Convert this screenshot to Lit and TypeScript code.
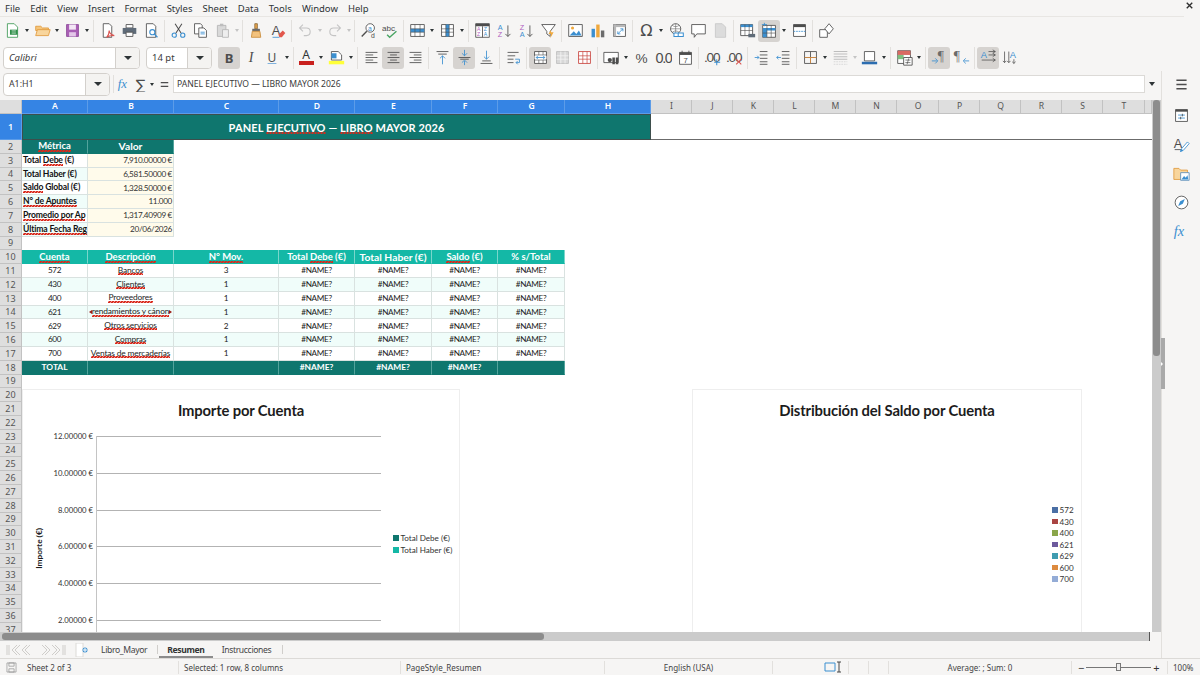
import { LitElement, html, css, svg } from 'lit';
import { customElement } from 'lit/decorators.js';

const BLUE = '#3b8fd0';
const LINE = '#4d4d4d';

// toolbar glyphs, drawn on a 20x20 box
const ICONS: Record<string, unknown> = {
  newdoc: svg`<path d="M4 2h8l4 4v12H4z" fill="#fff" stroke="#3f9a55"/><path d="M7 9h9v6H7z" fill="#2f8f4a"/><path d="M9 10.500h5M9 13h5" stroke="#cfe9d4"/>`,
  open: svg`<path d="M2 5h6l2 2h7v3H2z" fill="#f5c57a" stroke="#e09a3c"/><path d="M2 16l2-7h15l-2 7z" fill="#f8d59c" stroke="#e09a3c"/>`,
  save: svg`<path d="M3 3h14v14H3z" fill="#a95fb5" stroke="#8d4a9a"/><path d="M6 3h8v6H6z" fill="#f3e6f5"/><path d="M6 12h8v5H6z" fill="#e4c7e9"/>`,
  pdf: svg`<path d="M5 2h7l3 3v13H5z" fill="#fff" stroke="${LINE}"/><path d="M9 18c2-2 3-6 3-8 0 3 2 5 6 6-3-.5-6 0-9 2z" fill="none" stroke="#d9534f" stroke-width="1.300"/>`,
  print: svg`<path d="M6 3h8v4H6z" fill="#fff" stroke="${LINE}"/><path d="M2 7h16v7H2z" fill="#5f6b78"/><path d="M6 12h8v5H6z" fill="#fff" stroke="${LINE}"/>`,
  preview: svg`<path d="M4 2h8l3 3v13H4z" fill="#fff" stroke="${LINE}"/><circle cx="11" cy="12" r="3" fill="none" stroke="${BLUE}" stroke-width="1.300"/><path d="M13 14l4 4" stroke="${BLUE}" stroke-width="1.500"/>`,
  cut: svg`<path d="M6 2l7 11M14 2L7 13" stroke="${LINE}" stroke-width="1.200"/><circle cx="5" cy="15.500" r="2.500" fill="none" stroke="${BLUE}" stroke-width="1.300"/><circle cx="15" cy="15.500" r="2.500" fill="none" stroke="${BLUE}" stroke-width="1.300"/>`,
  copy: svg`<path d="M3 2h7l2 2v10H3z" fill="#fff" stroke="${LINE}"/><path d="M8 7h6l3 3v8H8z" fill="#fff" stroke="${LINE}"/><path d="M10 12h5M10 14h5" stroke="${BLUE}"/>`,
  paste: svg`<path d="M4 4h10v13H4z" fill="#d9d9d9" stroke="#b5b5b5"/><path d="M7 2h4v3H7z" fill="#bdbdbd"/><path d="M10 9h7v9h-7z" fill="#eee" stroke="#b5b5b5"/>`,
  clone: svg`<path d="M8 2h3v6H8z" fill="#e8a44c" stroke="#8a6a3a"/><path d="M5 8h9v3H5z" fill="#6b6b6b"/><path d="M5 11h9l1 7H4z" fill="#f3c27d" stroke="#c98b3a"/>`,
  clear: svg`<text x="2" y="15" font-family="Liberation Sans" font-size="15" fill="${LINE}">A</text><path d="M10 15l5-5 3 3-4 5h-3z" fill="#e2574c"/><path d="M3 18h8" stroke="${BLUE}"/>`,
  undo: svg`<path d="M7 3L3 7l4 4M3 7h8c6 0 6 9 0 9H8" fill="none" stroke="#c4c4c4" stroke-width="1.300"/>`,
  redo: svg`<path d="M13 3l4 4-4 4M17 7H9c-6 0-6 9 0 9h3" fill="none" stroke="#c4c4c4" stroke-width="1.300"/>`,
  find: svg`<circle cx="12" cy="7" r="5" fill="#fff" stroke="${LINE}"/><text x="9.500" y="10" font-family="Liberation Sans" font-size="8" fill="${BLUE}">a</text><path d="M8 11l-6 6" stroke="${LINE}" stroke-width="1.600"/><text x="13" y="19" font-family="Liberation Sans" font-size="8" fill="${LINE}">d</text>`,
  spell: svg`<text x="0" y="10" font-family="Liberation Sans" font-size="9.500" fill="${LINE}">abc</text><path d="M6 15l3 3 8-7" fill="none" stroke="#4aa564" stroke-width="1.600"/>`,
  rows: svg`<path d="M2 3h16v14H2z" fill="#fff" stroke="${LINE}"/><path d="M2 8h16v4H2z" fill="${BLUE}"/><path d="M2 8h16M2 12h16M7 3v14M13 3v14" stroke="${LINE}" stroke-width=".700"/>`,
  cols: svg`<path d="M3 3h14v14H3z" fill="#fff" stroke="${LINE}"/><path d="M8 3h4v14H8z" fill="${BLUE}"/><path d="M8 3v14M12 3v14M3 8h14M3 12h14" stroke="${LINE}" stroke-width=".700"/>`,
  sort: svg`<path d="M2 2h16v16H2z" fill="#fff" stroke="${LINE}"/><path d="M2 2h16v3H2z" fill="${LINE}"/><path d="M10 5v13" stroke="${LINE}"/><text x="3.500" y="11" font-family="Liberation Sans" font-size="6" fill="#b05fc0">A</text><text x="3.500" y="17" font-family="Liberation Sans" font-size="6" fill="#b05fc0">Z</text><text x="11.500" y="11" font-family="Liberation Sans" font-size="6" fill="${BLUE}">Z</text><text x="11.500" y="17" font-family="Liberation Sans" font-size="6" fill="${BLUE}">A</text>`,
  asc: svg`<text x="2" y="9" font-family="Liberation Sans" font-size="8.500" fill="${BLUE}">A</text><text x="2" y="18" font-family="Liberation Sans" font-size="8.500" fill="#b05fc0">Z</text><path d="M14 4v13M11 14l3 3 3-3" fill="none" stroke="${LINE}"/>`,
  desc: svg`<text x="2" y="9" font-family="Liberation Sans" font-size="8.500" fill="#b05fc0">Z</text><text x="2" y="18" font-family="Liberation Sans" font-size="8.500" fill="${BLUE}">A</text><path d="M14 4v13M11 14l3 3 3-3" fill="none" stroke="${LINE}"/>`,
  filter: svg`<path d="M2 3h16l-6 8v6l-4-3v-3z" fill="#fff" stroke="${LINE}"/><path d="M13 9l-3 5h3l-1 5 4-7h-3z" fill="#efa83c"/>`,
  image: svg`<path d="M2 3h16v14H2z" fill="#fff" stroke="${LINE}"/><circle cx="6.500" cy="7" r="1.800" fill="#efa83c"/><path d="M3 16l5-5 3 3 3-4 3 6z" fill="${BLUE}"/>`,
  chart: svg`<path d="M3 8h4v10H3z" fill="${BLUE}"/><path d="M8.500 3h4v15h-4z" fill="#efa83c"/><path d="M14 10h4v8h-4z" fill="#6b6b6b"/>`,
  pivot: svg`<path d="M3 3h14v14H3z" fill="#fff" stroke="${LINE}"/><path d="M3 3h14v3H3z" fill="#b8b8b8"/><path d="M3 3h3v14H3z" fill="#b8b8b8"/><path d="M8 14l6-6M11 8h3v3M8 11v3h3" fill="none" stroke="${BLUE}"/>`,
  omega: svg`<text x="10" y="17" text-anchor="middle" font-family="DejaVu Sans" font-size="19" fill="${LINE}">Ω</text>`,
  link: svg`<circle cx="9" cy="8" r="6" fill="#fff" stroke="${LINE}"/><path d="M3 8h12M9 2v12M5 4c3 2 5 2 8 0M5 12c3-2 5-2 8 0" stroke="${LINE}" stroke-width=".600" fill="none"/><path d="M7 13h5v4H7zM12 13h6v4h-6z" fill="#fff" stroke="${BLUE}" stroke-width="1.200"/>`,
  comment: svg`<path d="M2 3h16v11H8l-3 4v-4H2z" fill="#fff" stroke="${LINE}"/>`,
  headerdoc: svg`<path d="M4 2h8l4 4v12H4z" fill="#dcdcdc" stroke="#c8c8c8"/>`,
  printarea: svg`<path d="M2 3h14v13H2z" fill="#fff" stroke="${LINE}"/><path d="M2 3h14v3H2z" fill="${BLUE}"/><path d="M2 10h14M7 3v13M12 3v13" stroke="${LINE}" stroke-width=".700"/><path d="M11 14h8v4h-8z" fill="#5f6b78"/>`,
  freeze: svg`<path d="M2 4h15v14H2z" fill="#fff" stroke="${LINE}"/><path d="M2 7h15v3H2zM2 10h5v8H2z" fill="${BLUE}"/><path d="M2 13h15M7 4v14M12 4v14" stroke="${LINE}" stroke-width=".700"/><path d="M4 1v4M1 3h6" stroke="${BLUE}"/>`,
  split: svg`<path d="M3 3h14v14H3z" fill="#fff" stroke="${LINE}"/><path d="M3 3h14v3H3z" fill="${LINE}"/><path d="M3 11h14" stroke="${BLUE}" stroke-dasharray="2 1"/>`,
  shapes: svg`<path d="M2 9h9v9H2z" fill="#fff" stroke="${LINE}"/><path d="M13 2l5 6-5 6-5-6z" fill="#fff" stroke="${LINE}"/>`,
  left: svg`<path d="M3 4h14M3 7h9M3 10h14M3 13h9M3 16h14" stroke="${LINE}"/>`,
  center: svg`<path d="M3 4h14M6 7h8M3 10h14M6 13h8M3 16h14" stroke="${LINE}"/>`,
  right: svg`<path d="M3 4h14M8 7h9M3 10h14M8 13h9M3 16h14" stroke="${LINE}"/>`,
  vtop: svg`<path d="M3 3h14M5 6h10" stroke="${LINE}"/><path d="M10 18V8M7 11l3-3 3 3" fill="none" stroke="${BLUE}"/>`,
  vmid: svg`<path d="M3 10h14M5 12h10" stroke="${LINE}"/><path d="M10 1v7M7 5l3 3 3-3M10 19v-5M7 16l3-3 3 3" fill="none" stroke="${BLUE}"/>`,
  vbot: svg`<path d="M3 17h14M5 14h10" stroke="${LINE}"/><path d="M10 2v10M7 9l3 3 3-3" fill="none" stroke="${BLUE}"/>`,
  wrap: svg`<path d="M3 4h13M3 8h9M3 12h7M3 16h7" stroke="${LINE}"/><path d="M12 12h5v4h-4M15 14l-2 2 2 2" fill="none" stroke="${BLUE}"/>`,
  merge: svg`<path d="M3 3h14v14H3z" fill="#fff" stroke="${LINE}"/><path d="M3 8h14v4H3z" fill="#fff"/><path d="M3 7h14M3 13h14M8 3v4M13 3v4M8 13v4M13 13v4" stroke="${LINE}" stroke-width=".700"/><path d="M5 10h10M5 10l2-2M5 10l2 2M15 10l-2-2M15 10l-2 2" stroke="${BLUE}" fill="none"/>`,
  mergeoff: svg`<path d="M3 3h14v14H3z" fill="#d8d8d8" stroke="#bdbdbd"/><path d="M3 8h14M3 12h14M8 3v14M13 3v14" stroke="#f2f2f2"/>`,
  unmerge: svg`<path d="M3 3h14v14H3z" fill="#fff" stroke="#c9453f"/><path d="M3 8h14M3 12h14M8 3v14M13 3v14" stroke="#c9453f" stroke-width=".800"/>`,
  currency: svg`<path d="M1 4h17v12H1z" fill="#fff" stroke="${LINE}"/><circle cx="8" cy="13" r="2.500" fill="${LINE}"/><path d="M11 10h3v8h-3zM15 10h3v8h-3z" fill="${LINE}"/>`,
  percent: svg`<text x="10" y="16" text-anchor="middle" font-family="Liberation Sans" font-size="16" fill="${LINE}">%</text>`,
  number: svg`<text x="10" y="16" text-anchor="middle" font-family="Liberation Sans" font-size="17" letter-spacing="-1.500" fill="${LINE}">0.0</text>`,
  date: svg`<path d="M3 4h14v14H3z" fill="#fff" stroke="${LINE}"/><path d="M3 4h14v3H3z" fill="${LINE}"/><path d="M6 2v3M14 2v3" stroke="${LINE}"/><text x="10" y="16" text-anchor="middle" font-family="Liberation Sans" font-size="9" fill="${LINE}">7</text>`,
  addDec: svg`<text x="9" y="15" text-anchor="middle" font-family="Liberation Sans" font-size="16" letter-spacing="-1.500" fill="${LINE}">.00</text><path d="M15 12v7M12 15.500h7" stroke="${BLUE}" stroke-width="1.200"/>`,
  delDec: svg`<text x="9" y="15" text-anchor="middle" font-family="Liberation Sans" font-size="16" letter-spacing="-1.500" fill="${LINE}">.00</text><path d="M12 12l6 6M18 12l-6 6" stroke="#d9534f" stroke-width="1.200"/>`,
  indent: svg`<path d="M8 3h9M8 7h9M8 11h9M8 15h9M8 18h9" stroke="${LINE}"/><path d="M2 10h5M5 8l2 2-2 2" fill="none" stroke="${BLUE}"/>`,
  outdent: svg`<path d="M8 3h9M8 7h9M8 11h9M8 15h9M8 18h9" stroke="${LINE}"/><path d="M7 10H2M4 8l-2 2 2 2" fill="none" stroke="${BLUE}"/>`,
  borders: svg`<path d="M3 3h14v14H3zM3 10h14M10 3v14" fill="none" stroke="${LINE}"/><path d="M3 10h14M10 10v7" stroke="#d98c3f"/>`,
  borderstyle: svg`<path d="M2 3h16M2 6h16M2 9h16M2 12h16" stroke="#bdbdbd" stroke-width="1.200"/><path d="M2 15h16M2 18h16" stroke="#d5d5d5" stroke-dasharray="2 1"/>`,
  bordercolor: svg`<path d="M4 3h12v11H4z" fill="#fff" stroke="${LINE}"/><path d="M1 15h18v3H1z" fill="#2c6db0"/>`,
  cond: svg`<path d="M2 2h15v15H2z" fill="#fff" stroke="${LINE}"/><path d="M2 2h15v5H2z" fill="#d96a62"/><path d="M2 7h7v5H2z" fill="#7fbf7f"/><path d="M9 10h10v9H9z" fill="#fff" stroke="${LINE}"/><path d="M11 13h6M11 16h6M15 11l-2 7" stroke="${LINE}" stroke-width=".800"/>`,
  ltr: svg`<text x="8" y="14" font-family="Liberation Serif" font-size="16" fill="#6b6b6b">¶</text><path d="M1 14h6M5 11l3 3-3 3" fill="none" stroke="${BLUE}"/>`,
  rtl: svg`<text x="1" y="14" font-family="Liberation Serif" font-size="16" fill="#6b6b6b">¶</text><path d="M19 14h-6M15 11l-3 3 3 3" fill="none" stroke="${BLUE}"/>`,
  hdir: svg`<text x="1" y="10" font-family="Liberation Sans" font-size="11" fill="${BLUE}">A</text><path d="M10 3h8M10 7h8M2 13h16M15 1l3 2-3 2M15 5l3 2-3 2M15 11l3 2-3 2" fill="none" stroke="${LINE}" stroke-width=".900"/>`,
  vdir: svg`<text x="9" y="11" font-family="Liberation Sans" font-size="11" fill="${BLUE}">A</text><path d="M3 3v13M8 3v13M14 12v5M1 14l2 2 2-2M6 14l2 2 2-2M12 15l2 2 2-2" fill="none" stroke="${LINE}" stroke-width=".900"/>`,
  props: svg`<path d="M3 3h14v14H3z" fill="#fff" stroke="${LINE}"/><path d="M3 3h14v2.500H3z" fill="${LINE}"/><path d="M6 9.500h8M6 13h8" stroke="${BLUE}"/><path d="M11 8v3M9 11.500v3" stroke="${LINE}"/>`,
  styles: svg`<text x="1" y="14" font-family="Liberation Sans" font-size="15" fill="${LINE}">A</text><path d="M2 16h9" stroke="${LINE}"/><path d="M9 18l1-3 7-8 2 2-7 8z" fill="#fff" stroke="${BLUE}"/><path d="M8 19l2-4 2 2z" fill="${BLUE}"/>`,
  gallery: svg`<path d="M1 4h6l2 2h8v11H1z" fill="#f8d59c" stroke="#e09a3c"/><path d="M9 9h10v9H9z" fill="#fff" stroke="#5b8db8"/><path d="M10 17l3-4 2 2 2-3 1 5z" fill="${BLUE}"/>`,
  navigator: svg`<circle cx="10" cy="10" r="7.500" fill="#fff" stroke="${LINE}"/><path d="M14 6l-2.500 5.500L6 14l2.500-5.500z" fill="${BLUE}"/>`,
  fx: svg`<text x="1" y="15" font-family="Liberation Serif" font-style="italic" font-size="17" fill="${BLUE}">fx</text>`,
  sum: svg`<text x="10" y="17" text-anchor="middle" font-family="DejaVu Sans" font-size="19" fill="${LINE}">∑</text>`,
  equals: svg`<path d="M5 7.500h10M5 12.500h10" stroke="${LINE}" stroke-width="1.500"/>`,
  menu: svg`<path d="M4 5h12M4 10h12M4 15h12" stroke="${LINE}" stroke-width="1.500"/>`,
  close: svg`<path d="M5 5l10 10M15 5L5 15" stroke="#2e2e2e" stroke-width="2.500"/>`,
  saveStatus: svg`<path d="M3 3h14v14H3z" fill="none" stroke="#8a8a8a"/><path d="M6 3h8v5H6zM6 12h8v5H6z" fill="none" stroke="#8a8a8a"/>`,
};

type Tool = string | { i: string; on?: boolean };
const t = (i: string) => ({ i, on: true });

const TOOLS_1: Tool[] = [
  'newdoc', '>', 'open', '>', 'save', '>', '|', 'pdf', 'print', 'preview', '|', 'cut', 'copy', 'paste', '>d', '|',
  'clone', 'clear', '|', 'undo', '>d', 'redo', '>d', '|', 'find', 'spell', '|', 'rows', '>', 'cols', '>', '|',
  'sort', 'asc', 'desc', 'filter', '|', 'image', 'chart', 'pivot', '|', 'omega', '>', 'link', 'comment', 'headerdoc', '|',
  'printarea', t('freeze'), '>', 'split', '|', 'shapes',
];

const TOOLS_2: Tool[] = [
  'left', t('center'), 'right', '|', 'vtop', t('vmid'), 'vbot', '|', 'wrap', '|', t('merge'), 'mergeoff', 'unmerge', '|',
  'currency', '>', 'percent', 'number', 'date', '|', 'addDec', 'delDec', '|', 'indent', 'outdent', '|',
  'borders', '>', 'borderstyle', '>d', 'bordercolor', '>', '|', 'cond', '>', '|', t('ltr'), 'rtl', '|', t('hdir'), 'vdir',
];

const MENU = ['File', 'Edit', 'View', 'Insert', 'Format', 'Styles', 'Sheet', 'Data', 'Tools', 'Window', 'Help'];
const COLS: [string, number][] = [
  ['A', 66], ['B', 86], ['C', 105], ['D', 76], ['E', 77], ['F', 66], ['G', 67], ['H', 86], ['I', 41], ['J', 41], ['K', 41],
  ['L', 41], ['M', 41], ['N', 41], ['O', 42], ['P', 41], ['Q', 41], ['R', 41], ['S', 41], ['T', 42], ['', 7],
];

const METRICS = [
  ['Total |Debe| (€)', '7,910.00000 €'],
  ['Total Haber (€)', '6,581.50000 €'],
  ['|Saldo| Global (€)', '1,328.50000 €'],
  ['|N° de Apuntes|', '11.000'],
  ['|Promedio por Ap|', '1,317.40909 €'],
  ['|Última Fecha Reg|', '20/06/2026'],
];
const ACCOUNTS = [
  ['572', 'Bancos', '3'],
  ['430', 'Clientes', '1'],
  ['400', 'Proveedores', '1'],
  ['621', 'rendamientos y cánon', '1'],
  ['629', 'Otros servicios', '2'],
  ['600', 'Compras', '1'],
  ['700', 'Ventas de mercaderías', '1'],
];
const HEADS = ['|Cuenta|', '|Descripción|', '|N° Mov.|', 'Total |Debe| (€)', 'Total Haber (€)', '|Saldo| (€)', '% s/Total'];

@customElement('app-root')
export class AppRoot extends LitElement {
  static styles = css`
    :host { display: block; width: 1200px; height: 675px; overflow: hidden; background: #f6f5f4; color: #2e3436; font-family: "Noto Sans", sans-serif; font-size: 9.5px; }
    .app { display: flex; flex-direction: column; height: 675px; }
    .menubar { height: 16px; display: flex; align-items: center; padding-left: 5px; gap: 10px; font-size: 9.5px; border-bottom: 1px solid #e8e6e3; margin-right: 16px; position: relative; }
    .close { position: absolute; right: -16px; top: 0; width: 16px; height: 16px; }
    .close svg { width: 11px; height: 11px; }
    .toolbar { display: flex; align-items: center; }
    .t1 { height: 27px; padding-left: 1px; }
    .t2 { height: 27px; padding-left: 3px; }
    .btn { width: 22px; height: 22px; flex: none; display: flex; align-items: center; justify-content: center; border-radius: 3px; }
    .btn.on { background: #d6d3d0; }
    .btn svg { width: 17px; height: 17px; }
    .tight { margin-left: -1px; }
    .arrow { width: 8px; height: 22px; flex: none; display: flex; align-items: center; justify-content: center; }
    .arrow::after { content: ""; border: 2.500px solid transparent; border-top: 3px solid #2e3436; border-bottom: 0; }
    .arrow.dim { width: 7px; }
    .arrow.dim::after { border-top-color: #c4c4c4; }
    .sep { width: 5px; height: 22px; flex: none; display: flex; justify-content: center; }
    .sep::after { content: ""; width: 1px; background: #e2e0dd; }
    .combo { display: flex; height: 22px; background: #fff; border: 1px solid #d3d0cc; border-radius: 4px; box-sizing: border-box; flex: none; overflow: hidden; align-items: stretch; }
    .combo .val { flex: 1; padding-left: 5px; display: flex; align-items: center; font-size: 9.500px; color: #3b3b3b; }
    .combo .drop { width: 23px; background: #f4f3f1; border-left: 1px solid #d3d0cc; display: flex; align-items: center; justify-content: center; }
    .combo .drop::after { content: ""; border: 4px solid transparent; border-top: 4px solid #2e3436; border-bottom: 0; }
    .font { width: 137px; margin-right: 6px; font-style: italic; }
    .size { width: 66px; margin-right: 6px; }
    .ch { width: 22px; height: 22px; flex: none; display: flex; align-items: center; justify-content: center; border-radius: 3px; font-size: 13px; color: #4d4d4d; }
    .ch.on { background: #d6d3d0; font-weight: 700; }
    .ch.i { font-family: "Liberation Serif", serif; font-style: italic; font-size: 14px; }
    .ch.u { text-decoration: underline; text-decoration-color: #7fb2de; text-underline-offset: 1px; font-size: 12px; }
    .colorA { display: flex; flex-direction: column; align-items: center; width: 22px; flex: none; font-size: 12px; line-height: 10px; }
    .colorA i { width: 15px; height: 3.500px; background: #c9211e; margin-top: 1px; }
    .main { flex: 1; display: flex; min-height: 0; position: relative; }
    .work { width: 1161px; flex: none; display: flex; flex-direction: column; }
    .sidebar { width: 39px; flex: none; box-sizing: border-box; border-left: 1px solid #e2e0dd; display: flex; flex-direction: column; align-items: center; padding-top: 1px; }
    .sidebar .btn { width: 24px; height: 24px; margin-bottom: 5.200px; }
    .sidebar .btn.first { margin-bottom: 7px; }
    .formula { height: 26px; margin-bottom: 3px; display: flex; align-items: center; padding-left: 3px; flex: none; }
    .name { width: 107px; height: 23px; margin-right: 1px; }
    .name .val { font-size: 8.800px; }
    .formula .sep { height: 18px; }
    .formula .btn { width: 16px; }
    .formula .btn svg { width: 15px; height: 15px; }
    .input { width: 972px; margin-left: 1px; height: 18px; background: #fff; border: 1px solid #dcdad7; box-sizing: border-box; display: flex; align-items: center; padding-left: 3px; font-size: 8.600px; color: #3b3b3b; flex: none; }
    .formula .big { width: 14px; height: 18px; display: flex; align-items: center; justify-content: center; }
    .formula .big::after { content: ""; border: 3.500px solid transparent; border-top: 4px solid #2e3436; border-bottom: 0; }
    .grid-wrap { flex: 1; min-height: 0; display: flex; }
    .sheet { width: 1152px; flex: none; position: relative; overflow: hidden; background: #fff; }
    .vscroll { width: 9px; flex: none; background: #cbcbcb; }
    .vscroll i { display: block; width: 7px; margin: 0 1px; height: 256px; background: #8c8c8c; border-radius: 3px; }
    .grip { position: absolute; left: 1161px; top: 267px; width: 4px; height: 51px; background: #a9a9a9; display: flex; align-items: center; }
    .grip::after { content: ""; border: 2px solid transparent; border-left: 2px solid #fff; border-right: 0; }
    .table { display: grid; font-family: "Lato", sans-serif; font-size: 8.200px; }
    .cell { box-sizing: border-box; white-space: nowrap; overflow: hidden; display: flex; align-items: center; justify-content: center; line-height: 1; letter-spacing: -.350px; color: #1c1c1c; }
    .ch-head { background: #dedede; border-right: 1px solid #c2c2c2; border-bottom: 1px solid #c2c2c2; color: #555; font-family: "Noto Sans", sans-serif; font-size: 8.600px; letter-spacing: 0; padding-left: 1px; }
    .ch-head.sel { background: #3584e4; color: #fff; border-color: #5c9ce8; font-weight: 600; }
    .ch-head.r { font-size: 9px; padding-left: 0; }
    .title { grid-column: 2 / span 8; background: #0f766e; color: #fff; font-size: 11px; font-weight: 700; letter-spacing: .100px; outline: 1.500px solid #3d4e4c; outline-offset: -1px; }
    .rest { grid-column: 10 / -1; border-bottom: 1.500px solid #6b6b6b; }
    .fill2 { grid-column: 2 / -1; }
    .fill4 { grid-column: 4 / -1; }
    .fill9 { grid-column: 9 / -1; }
    .b { border-right: 1px solid #d9e2e0; border-bottom: 1px solid #d9e2e0; }
    .dark { background: #0f766e; color: #fff; font-weight: 700; border-right: 1px solid #53a39c; border-bottom-color: #0f766e; font-size: 9.500px; letter-spacing: 0; }
    .teal { background: #14b8a6; color: #fff; font-weight: 700; border-right: 1px solid #7ad6cb; border-bottom-color: #14b8a6; font-size: 9.500px; letter-spacing: 0; }
    .large { font-size: 10.300px; }
    .foot { font-size: 8.400px; }
    .lab { justify-content: flex-start; padding-left: 1px; font-weight: 700; color: #111; font-size: 8.600px; letter-spacing: -.150px; }
    .val-c { justify-content: flex-end; padding-right: 1px; background: #fffbeb; color: #333; }
    .desc { font-size: 8.400px; letter-spacing: -.150px; }
    .mint { background: #f0fdfa; }
    u {
      text-decoration: none;
      padding-bottom: 1px;
      background:
        linear-gradient(135deg, transparent 38%, #d9291c 38%, #d9291c 62%, transparent 62%) 0 100% / 3px 2px repeat-x,
        linear-gradient(45deg, transparent 38%, #d9291c 38%, #d9291c 62%, transparent 62%) 1.5px 100% / 3px 2px repeat-x;
    }
    .title u { padding-bottom: 0; background-size: 3px 1.500px; }
    .clip::before, .clip::after { content: ""; border: 2px solid transparent; flex: none; }
    .clip::before { border-right: 3px solid #9c1c14; border-left: 0; }
    .clip::after { border-left: 3px solid #9c1c14; border-right: 0; }
    .chart { position: absolute; background: #fff; border: 1px solid #eeeeee; box-sizing: border-box; font-family: "Lato", sans-serif; color: #1c1c1c; }
    .c1 { left: 22px; top: 289px; width: 438px; height: 260px; }
    .c2 { left: 692px; top: 289px; width: 390px; height: 260px; }
    .chart h3 { position: absolute; left: 0; right: 0; top: 11px; margin: 0; text-align: center; font-size: 14.800px; font-weight: 700; letter-spacing: -.150px; }
    .tick { position: absolute; right: 366px; font-size: 7.700px; line-height: 10px; color: #333; white-space: nowrap; }
    .gridline { position: absolute; left: 73px; width: 285px; height: 1px; background: #b3b3b3; }
    .axis { position: absolute; left: 73px; top: 46px; width: 1px; height: 200px; background: #c4c4c4; }
    .ytitle { position: absolute; left: 11px; top: 138px; writing-mode: vertical-rl; transform: rotate(180deg); font-size: 8.300px; font-weight: 700; }
    .legend { position: absolute; display: flex; flex-direction: column; font-size: 8.100px; color: #333; }
    .legend div { display: flex; align-items: center; gap: 2px; }
    .legend i { width: 5.500px; height: 5.500px; flex: none; }
    .l1 { left: 370px; top: 143px; gap: 2px; }
    .l2 { left: 359px; top: 115px; gap: 1.500px; }
    .hrow { width: 1162px; flex: none; box-sizing: border-box; border-right: 1px solid #e2e0dd; }
    .hscroll { height: 9px; background: #cbcbcb; width: 1150px; border-right: 1px solid #555; box-sizing: border-box; }
    .hscroll i { display: block; width: 542px; height: 7px; margin: 0 0 0 2px; position: relative; top: 1px; background: #8c8c8c; border-radius: 3px; }
    .tabs { height: 17px; display: flex; align-items: center; font-size: 8.600px; letter-spacing: -.350px; box-sizing: border-box; color: #444; }
    .nav { width: 60px; height: 12px; margin-left: 6px; margin-right: 6px; flex: none; }
    .add { width: 16px; height: 14px; margin-left: 3px; flex: none; }
    .tab { height: 16px; display: flex; align-items: center; padding: 0 8px; }
    .tab.first { margin-left: 2px; padding-right: 10px; }
    .tab.last { padding-right: 11px; }
    .tab.cur { font-weight: 700; border-bottom: 2px solid #8c8c8c; box-sizing: border-box; margin: 0 1px; padding: 2px 8px 0; color: #333; }
    .tabsep { width: 1px; height: 9px; background: #d0cecb; }
    .status { height: 17px; flex: none; border-top: 1px solid #dcdad7; box-sizing: border-box; display: grid; grid-template-columns: 22px 156px 222px 204px 168px 76px 20px 20px 183px 96px 33px; align-items: center; font-size: 8px; color: #444; }
    .status > div { display: flex; align-items: center; height: 13px; padding-left: 5px; box-sizing: border-box; border-left: 1px solid #e2e0dd; white-space: nowrap; }
    .status > div:first-child { border: 0; padding-left: 5px; }
    .status > div.noline { border: 0; }
    .status .mid { justify-content: center; padding-left: 0; }
    .status .end { justify-content: flex-end; padding-right: 4px; }
    .status .slider { gap: 2px; padding-left: 6px; font-size: 11px; color: #333; }
    .track { width: 65px; height: 1px; background: #777; display: flex; align-items: center; justify-content: center; flex: none; }
    .track i { width: 3px; height: 6px; background: #eee; border: 1px solid #777; flex: none; }
  `;

  private icon(name: string) {
    return html`<svg viewBox="0 0 20 20">${ICONS[name]}</svg>`;
  }

  private tool(x: Tool) {
    if (typeof x === 'string') {
      if (x === '|') return html`<span class="sep"></span>`;
      if (x === '>') return html`<span class="arrow"></span>`;
      if (x === '>d') return html`<span class="arrow dim"></span>`;
      return html`<span class="btn">${this.icon(x)}</span>`;
    }
    return html`<span class="btn on">${this.icon(x.i)}</span>`;
  }

  // "a|b|c" -> the parts between bars get the spell check squiggle
  private words(s: string) {
    return s.split('|').map((p, i) => (i % 2 ? html`<u>${p}</u>` : p));
  }

  private rowHead(n: number, sel = false) {
    return html`<div class="cell ch-head r ${sel ? 'sel' : ''}">${n}</div>`;
  }

  private sheetTable() {
    const rows = [];
    rows.push(html`<div class="cell ch-head"></div>`);
    COLS.forEach(([c], i) => rows.push(html`<div class="cell ch-head ${i < 8 ? 'sel' : ''}">${c}</div>`));
    rows.push(this.rowHead(1, true));
    rows.push(html`<div class="cell title"><span>PANEL <u>EJECUTIVO</u> — <u>LIBRO</u> MAYOR 2026</span></div><div class="rest"></div>`);
    rows.push(this.rowHead(2));
    rows.push(html`<div class="cell b dark"><u>Métrica</u></div><div class="cell b dark large">Valor</div><div class="fill4"></div>`);
    METRICS.forEach((m, i) => {
      rows.push(this.rowHead(3 + i));
      rows.push(html`<div class="cell b lab ${i % 2 ? 'mint' : ''}"><span>${this.words(m[0])}</span></div><div class="cell b val-c">${m[1]}</div><div class="fill4"></div>`);
    });
    rows.push(this.rowHead(9));
    rows.push(html`<div class="fill2"></div>`);
    rows.push(this.rowHead(10));
    HEADS.forEach((h) => rows.push(html`<div class="cell b teal ${h === 'Total Haber (€)' ? 'large' : ''}"><span>${this.words(h)}</span></div>`));
    rows.push(html`<div class="fill9"></div>`);
    ACCOUNTS.forEach((a, i) => {
      const mint = i % 2 ? 'mint' : '';
      rows.push(this.rowHead(11 + i));
      rows.push(html`<div class="cell b ${mint}">${a[0]}</div>
        <div class="cell b desc ${mint} ${i === 3 ? 'clip' : ''}"><u>${a[1]}</u></div>
        <div class="cell b ${mint}">${a[2]}</div>
        ${[0, 1, 2, 3].map(() => html`<div class="cell b ${mint}">#NAME?</div>`)}
        <div class="fill9"></div>`);
    });
    rows.push(this.rowHead(18));
    rows.push(html`<div class="cell b dark foot">TOTAL</div><div class="cell b dark"></div><div class="cell b dark"></div>
      <div class="cell b dark foot">#NAME?</div><div class="cell b dark foot">#NAME?</div><div class="cell b dark foot">#NAME?</div><div class="cell b dark"></div>
      <div class="fill9"></div>`);
    for (let n = 19; n <= 37; n++) {
      rows.push(this.rowHead(n));
      rows.push(html`<div class="fill2"></div>`);
    }
    return rows;
  }

  render() {
    const ticks = ['12.00000 €', '10.00000 €', '8.00000 €', '6.00000 €', '4.00000 €', '2.00000 €'];
    const colTemplate = `22px ${COLS.map((c) => c[1] + 'px').join(' ')}`;
    const rowTemplate = `14px 26px repeat(36, 13.8px)`;
    return html`<div class="app">
      <div class="menubar">
        ${MENU.map((m) => html`<span>${m}</span>`)}
        <span class="close">${this.icon('close')}</span>
      </div>
      <div class="toolbar t1">${TOOLS_1.map((x) => this.tool(x))}</div>
      <div class="toolbar t2">
        <div class="combo font"><span class="val">Calibri</span><span class="drop"></span></div>
        <div class="combo size"><span class="val">14 pt</span><span class="drop"></span></div>
        <span class="ch on">B</span>
        <span class="ch i">I</span>
        <span class="ch u tight">U</span><span class="arrow"></span>
        <span class="sep"></span>
        <span class="btn tight"><span class="colorA">A<i></i></span></span><span class="arrow"></span>
        <span class="btn"><svg viewBox="0 0 20 20"><path d="M4 3h8l4 4v6H4z" fill="#fff" stroke="#4d4d4d"/><path d="M4 5h6v6H4z" fill="${BLUE}"/><rect x="1" y="14" width="18" height="4" fill="#ffff38"/></svg></span><span class="arrow"></span>
        <span class="sep"></span>
        ${TOOLS_2.map((x) => this.tool(x))}
      </div>
      <div class="main">
        <div class="work">
          <div class="formula">
            <div class="combo name"><span class="val">A1:H1</span><span class="drop"></span></div>
            <span class="sep"></span>
            <span class="btn">${this.icon('fx')}</span>
            <span class="btn">${this.icon('sum')}</span><span class="arrow"></span>
            <span class="btn">${this.icon('equals')}</span>
            <div class="input">PANEL EJECUTIVO — LIBRO MAYOR 2026</div>
            <span class="big"></span>
          </div>
          <div class="grid-wrap">
            <div class="sheet">
              <div class="table" style="grid-template-columns:${colTemplate};grid-template-rows:${rowTemplate}">
                ${this.sheetTable()}
              </div>
              <div class="chart c1">
                <h3>Importe por Cuenta</h3>
                ${ticks.map((x, i) => html`
                  <span class="tick" style="top:${41 + i * 36.8}px">${x}</span>
                  <span class="gridline" style="top:${46 + i * 36.8}px"></span>`)}
                <span class="axis"></span>
                <span class="ytitle">Importe (€)</span>
                <div class="legend l1">
                  <div><i style="background:#0f766e"></i>Total Debe (€)</div>
                  <div><i style="background:#14b8a6"></i>Total Haber (€)</div>
                </div>
              </div>
              <div class="chart c2">
                <h3>Distribución del Saldo por Cuenta</h3>
                <div class="legend l2">
                  ${[['572', '#4a6fa5'], ['430', '#a94442'], ['400', '#8aa64a'], ['621', '#6d5a9c'], ['629', '#3f9cb0'], ['600', '#dd8a3e'], ['700', '#94acd6']].map(
                    ([n, c]) => html`<div><i style="background:${c}"></i>${n}</div>`)}
                </div>
              </div>
            </div>
            <div class="vscroll"><i></i></div>
          </div>
        </div>
        <div class="grip"></div>
        <div class="sidebar">
          <span class="btn first">${this.icon('menu')}</span>
          <span class="btn">${this.icon('props')}</span>
          <span class="btn">${this.icon('styles')}</span>
          <span class="btn">${this.icon('gallery')}</span>
          <span class="btn">${this.icon('navigator')}</span>
          <span class="btn">${this.icon('fx')}</span>
        </div>
      </div>
      <div class="hrow">
        <div class="hscroll"><i></i></div>
        <div class="tabs">
          <svg class="nav" viewBox="0 0 60 12"><g fill="none" stroke="#cfcdca"><path d="M1 1v10M3 1v10M11 1L6 6l5 5M14 1L9 6l5 5M21 1l-5 5 5 5M24 1l-5 5 5 5M36 1l5 5-5 5M39 1l5 5-5 5M46 1l5 5-5 5M49 1l5 5-5 5M57 1v10M59 1v10"/></g></svg>
          <svg class="add" viewBox="0 0 16 14"><path d="M1 0h7v14H1z" fill="#fff" stroke="#dcdad7"/><circle cx="10" cy="7" r="2.500" fill="#3b8fd0"/><path d="M10 5v4M8 7h4" stroke="#fff"/></svg>
          <span class="tab first">Libro_Mayor</span><span class="tabsep"></span>
          <span class="tab cur">Resumen</span>
          <span class="tab last">Instrucciones</span><span class="tabsep"></span>
        </div>
      </div>
      <div class="status">
        <div><svg width="13" height="13" viewBox="0 0 20 20">${ICONS.saveStatus}</svg></div>
        <div class="noline">Sheet 2 of 3</div>
        <div>Selected: 1 row, 8 columns</div>
        <div>PageStyle_Resumen</div>
        <div class="mid">English (USA)</div>
        <div class="end"><svg width="20" height="12" viewBox="0 0 20 12"><path d="M1 2h10v8H1z" fill="none" stroke="#3b8fd0"/><path d="M15 1v10M13 1h4M13 11h4" stroke="#444" fill="none"/></svg></div>
        <div></div>
        <div></div>
        <div class="mid">Average: ; Sum: 0</div>
        <div class="slider">−<span class="track"><i></i></span>+</div>
        <div>100%</div>
      </div>
    </div>`;
  }
}
